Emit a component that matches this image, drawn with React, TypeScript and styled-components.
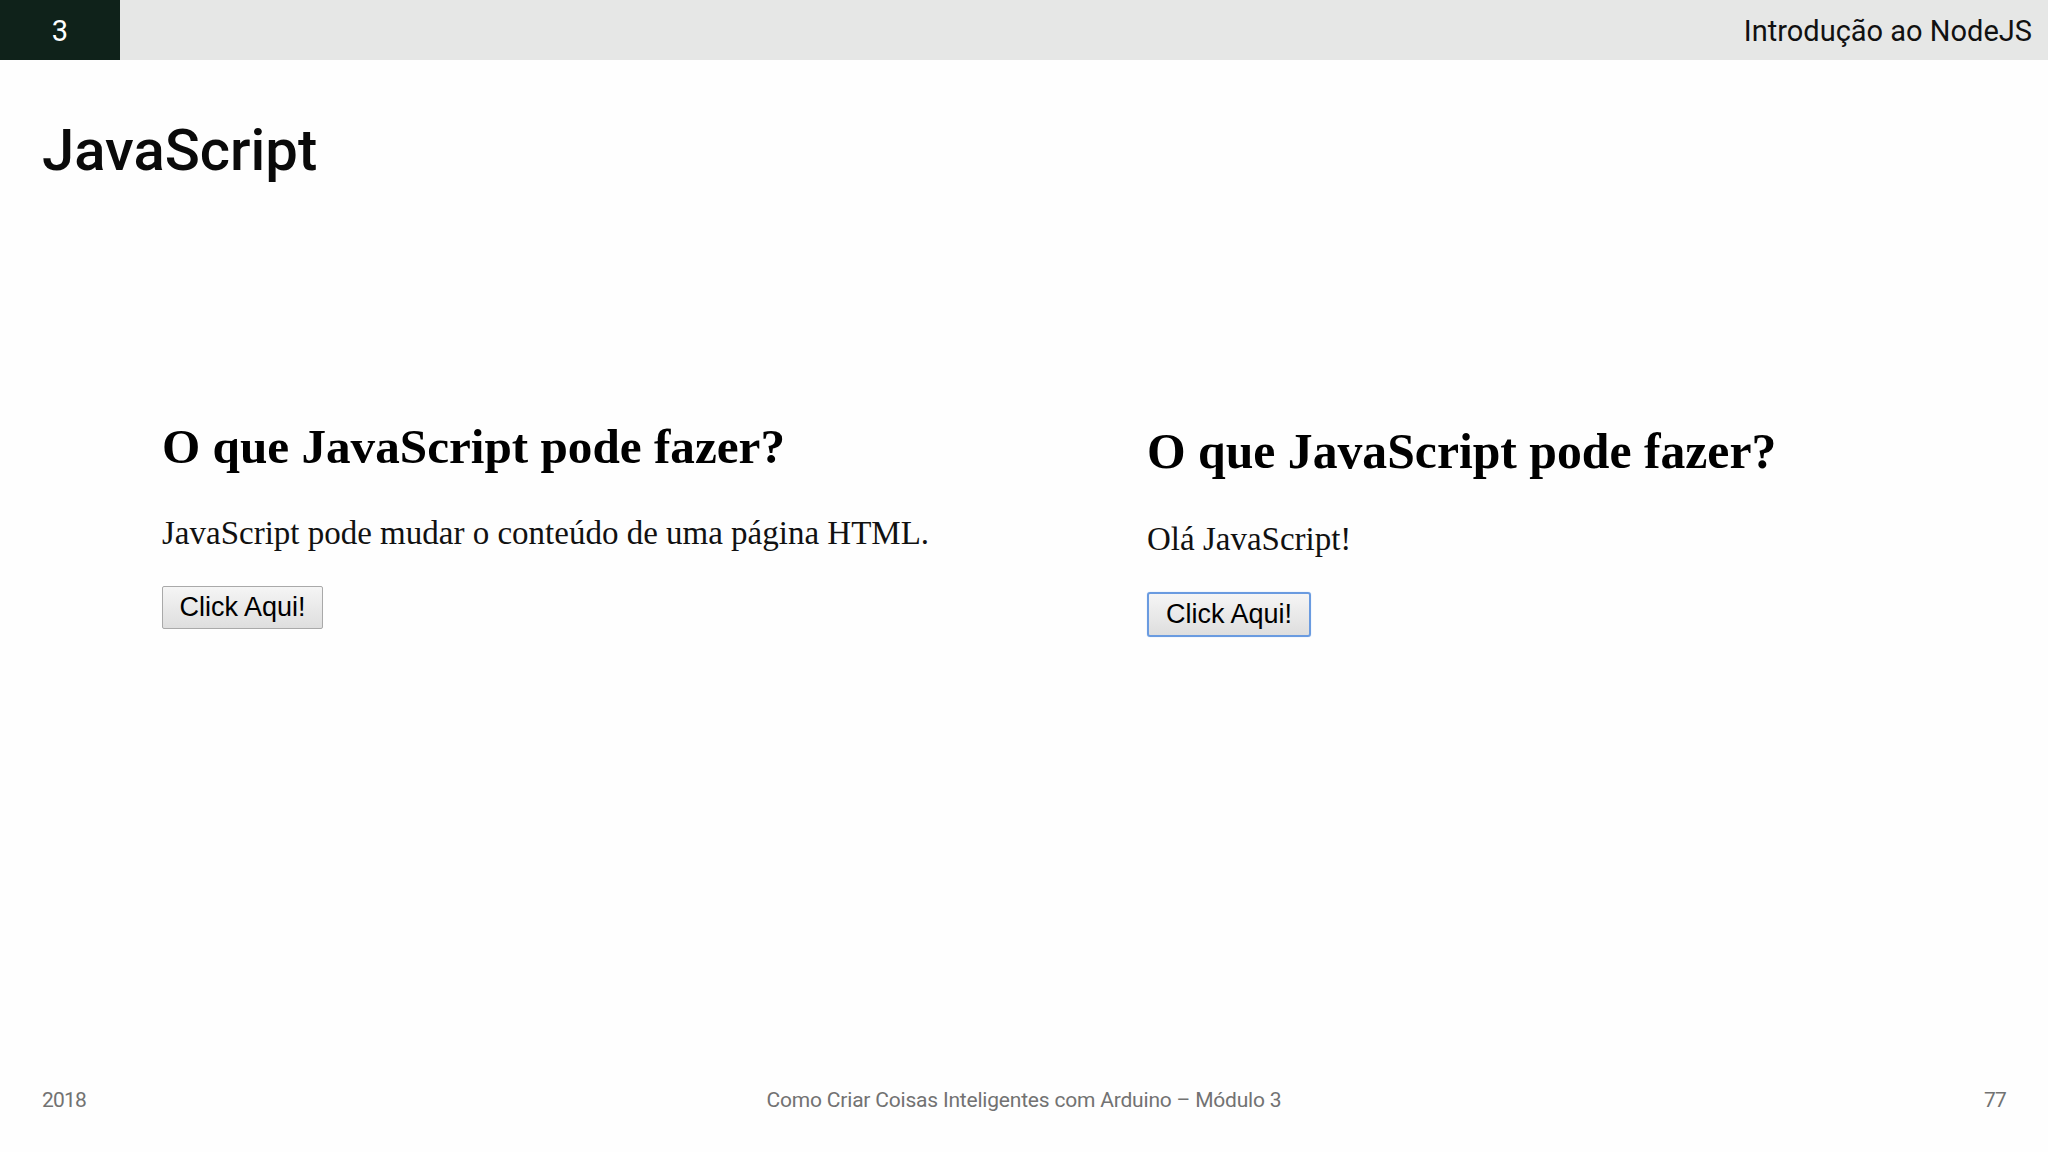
import React from "react";
import styled, { createGlobalStyle } from "styled-components";

const Global = createGlobalStyle`
  html, body { margin: 0; padding: 0; background: #fefefe; }
  #root { width: 2048px; height: 1152px; }
`;

const Slide = styled.div`
  width: 2048px;
  height: 1152px;
  display: flex;
  flex-direction: column;
  background: #fefefe;
  font-family: Roboto, "Noto Sans", sans-serif;
  overflow: hidden;
`;

const TopBar = styled.header`
  height: 60px;
  display: flex;
  flex-shrink: 0;
`;

const SectionBox = styled.div`
  width: 120px;
  background: #0f221a;
  color: #ffffff;
  display: flex;
  align-items: center;
  justify-content: center;
  font-size: 29px;
  line-height: 60px;
  padding-top: 2px;
`;

const TopTitle = styled.div`
  flex: 1;
  background: #e6e7e6;
  color: #111;
  display: flex;
  align-items: center;
  justify-content: flex-end;
  padding: 2px 16px 0 0;
  font-size: 29px;
  line-height: 60px;
`;

const PageTitle = styled.h1`
  margin: 55px 0 0 42px;
  font-weight: 500;
  font-size: 58px;
  line-height: 70px;
  color: #0a0a0a;
`;

const Demo = styled.main`
  flex: 1;
  display: flex;
  align-items: flex-start;
  padding: 232px 0 0 162px;
`;

const Column = styled.section<{ $width?: number; $offset: number }>`
  ${(p) => (p.$width ? `width: ${p.$width}px;` : "flex: 1;")}
  margin-top: ${(p) => p.$offset}px;
  display: flex;
  flex-direction: column;
  align-items: flex-start;
  font-family: "Liberation Serif", "Times New Roman", serif;
  color: #000;
`;

const DemoHeading = styled.h2<{ $size: number }>`
  margin: 0;
  font-weight: 700;
  font-size: ${(p) => p.$size}px;
  line-height: 58px;
`;

const DemoText = styled.p<{ $gap: number }>`
  margin: ${(p) => p.$gap}px 0 0;
  font-size: 33px;
  line-height: 40px;
  color: #111;
`;

const DemoButton = styled.button<{ $focused?: boolean }>`
  margin-top: 33px;
  font-family: "Liberation Sans", Arial, sans-serif;
  font-size: 27px;
  color: #000;
  padding: 0;
  box-sizing: border-box;
  width: ${(p) => (p.$focused ? 164 : 161)}px;
  height: ${(p) => (p.$focused ? 45 : 43)}px;
  border: ${(p) => (p.$focused ? "2px solid #6a9be0" : "1px solid #a9a9a9")};
  border-radius: ${(p) => (p.$focused ? 3 : 2)}px;
  background: linear-gradient(#f5f5f5, #dedede);
  box-shadow: ${(p) => (p.$focused ? "0 0 1px #9cc0f0" : "none")};
`;

const Footer = styled.footer`
  height: 30px;
  margin-bottom: 37px;
  padding: 0 42px;
  display: grid;
  grid-template-columns: 1fr auto 1fr;
  align-items: center;
  color: #727272;
  font-size: 21px;
  line-height: 30px;
  letter-spacing: -0.2px;
`;

const FootLeft = styled.span`
  justify-self: start;
  letter-spacing: -0.8px;
`;
const FootCenter = styled.span`
  justify-self: center;
`;
const FootRight = styled.span`
  justify-self: end;
  letter-spacing: -0.8px;
`;

export default function App() {
  return (
    <>
      <Global />
      <Slide>
        <TopBar>
          <SectionBox>3</SectionBox>
          <TopTitle>Introdução ao NodeJS</TopTitle>
        </TopBar>
        <PageTitle>JavaScript</PageTitle>
        <Demo>
          <Column $width={985} $offset={1}>
            <DemoHeading $size={49.2}>O que JavaScript pode fazer?</DemoHeading>
            <DemoText $gap={37}>JavaScript pode mudar o conteúdo de uma página HTML.</DemoText>
            <DemoButton type="button">Click Aqui!</DemoButton>
          </Column>
          <Column $offset={6}>
            <DemoHeading $size={49.7}>O que JavaScript pode fazer?</DemoHeading>
            <DemoText $gap={38}>Olá JavaScript!</DemoText>
            <DemoButton type="button" $focused>Click Aqui!</DemoButton>
          </Column>
        </Demo>
        <Footer>
          <FootLeft>2018</FootLeft>
          <FootCenter>Como Criar Coisas Inteligentes com Arduino – Módulo 3</FootCenter>
          <FootRight>77</FootRight>
        </Footer>
      </Slide>
    </>
  );
}
